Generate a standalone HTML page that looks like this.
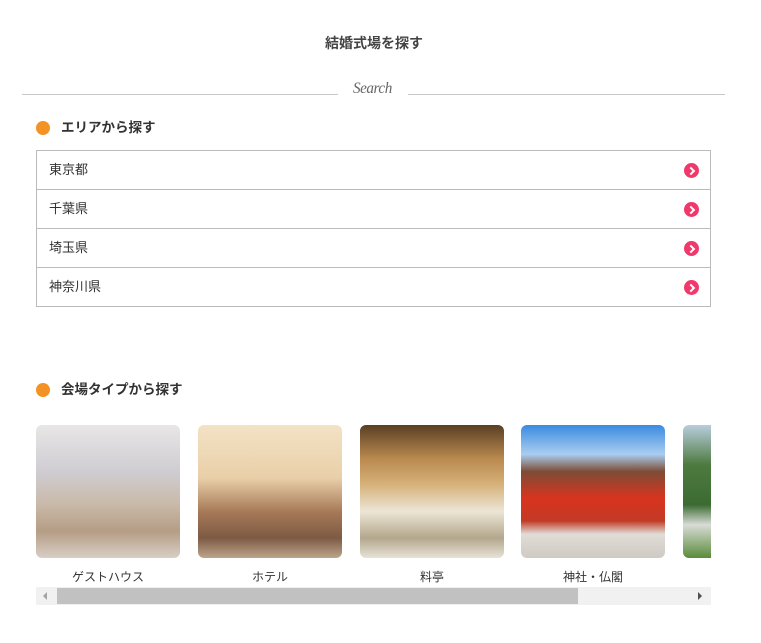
<!DOCTYPE html>
<html><head><meta charset="utf-8"><style>
*{margin:0;padding:0;box-sizing:border-box}
body{width:761px;height:643px;background:#fff;font-family:"Liberation Sans","Noto Sans CJK JP",sans-serif;color:#333;position:relative;overflow:hidden}
.a{position:absolute}
.t{left:0;width:748px;top:33px;text-align:center;font-size:14px;font-weight:bold;color:#444}
.ln{height:1px;background:#c8c8c8;top:94px}
.h{font-size:13.5px;font-weight:bold;color:#333}
.dot{width:14px;height:14px;border-radius:50%;background:#f39325}
.box{left:36px;top:150px;width:675px;height:157px;border:1px solid #bbb}
.row{height:39px;border-bottom:1px solid #bbb;position:relative;font-size:13px;line-height:38px;padding-left:12px}
.row:last-child{border-bottom:none}
.ar{position:absolute;right:11px;top:12px;width:15px;height:15px;border-radius:50%;background:#f0386b}
.ar:after{content:"";position:absolute;left:4px;top:5px;width:4px;height:4px;border-right:2px solid #fff;border-top:2px solid #fff;transform:rotate(45deg)}
.im{top:425px;width:144px;height:133px;border-radius:6px;overflow:hidden}
.lb{top:568px;width:144px;text-align:center;font-size:12px;color:#333}
</style></head><body>
<div class="a t">結婚式場を探す</div>
<div class="a ln" style="left:22px;width:316px"></div>
<div class="a ln" style="left:408px;width:317px"></div>
<div class="a" style="left:352px;top:80px;font-family:'Liberation Serif',serif;font-style:italic;font-size:16px;color:#666;letter-spacing:-0.5px;transform:scaleX(0.95)">Search</div>
<div class="a dot" style="left:36px;top:121px"></div>
<div class="a h" style="left:61px;top:116px">エリアから探す</div>
<div class="a box">
<div class="row">東京都<span class="ar"></span></div>
<div class="row">千葉県<span class="ar"></span></div>
<div class="row">埼玉県<span class="ar"></span></div>
<div class="row">神奈川県<span class="ar"></span></div>
</div>
<div class="a dot" style="left:36px;top:383px"></div>
<div class="a h" style="left:61px;top:378px">会場タイプから探す</div>
<div class="a im" style="left:36px;background:linear-gradient(180deg,#e8e6e6 0%,#cfcdd2 35%,#c9b9a8 60%,#b59d85 80%,#d8cfc6 100%)"></div>
<div class="a im" style="left:198px;background:linear-gradient(180deg,#f3e2c5 0%,#e9cfa8 40%,#a77a58 65%,#7d5a44 85%,#bda58a 100%)"></div>
<div class="a im" style="left:360px;background:linear-gradient(180deg,#5a3f24 0%,#b9894e 25%,#d6b27a 45%,#ece6d6 65%,#b3a78c 85%,#e8e3d8 100%)"></div>
<div class="a im" style="left:521px;background:linear-gradient(180deg,#3a8be0 0%,#a9cdf0 22%,#7d4c36 35%,#d8341f 55%,#c23a25 72%,#e0dcd6 82%,#cfcac3 100%)"></div>
<div class="a im" style="left:683px;width:28px;border-radius:6px 0 0 6px;background:linear-gradient(180deg,#b9cddd 0%,#4d7a3f 30%,#3c6b32 60%,#d8dcd6 75%,#5a8b3a 100%)"></div>
<div class="a lb" style="left:36px">ゲストハウス</div>
<div class="a lb" style="left:198px">ホテル</div>
<div class="a lb" style="left:360px">料亭</div>
<div class="a lb" style="left:521px">神社・仏閣</div>
<div class="a" style="left:36px;top:587px;width:675px;height:18px;background:#f1f1f1"></div>
<div class="a" style="left:57px;top:588px;width:521px;height:16px;background:#c1c1c1"></div>
<div class="a" style="left:43px;top:592px;width:0;height:0;border-top:4px solid transparent;border-bottom:4px solid transparent;border-right:4px solid #a3a3a3"></div>
<div class="a" style="left:698px;top:592px;width:0;height:0;border-top:4px solid transparent;border-bottom:4px solid transparent;border-left:4px solid #505050"></div>
</body></html>
